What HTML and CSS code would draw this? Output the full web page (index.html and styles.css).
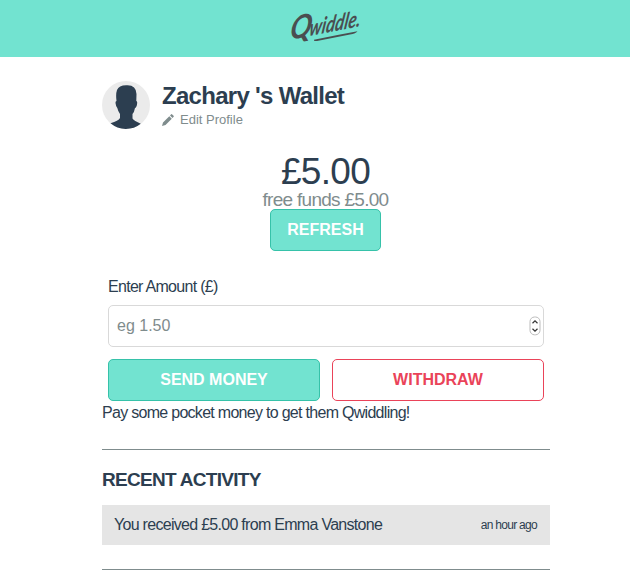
FILE: index.html
```html
<!DOCTYPE html>
<html lang="en">
<head>
<meta charset="utf-8">
<title>Qwiddle</title>
<link rel="stylesheet" href="styles.css">
</head>
<body>
<header class="topbar">
  <svg class="logo" width="90" height="57" viewBox="280 0 90 57" role="img" aria-label="Qwiddle">
    <g transform="translate(289 40) rotate(-11) skewX(-20)" class="wordmark">
      <text x="0" y="0" font-size="31" textLength="22" lengthAdjust="spacingAndGlyphs">Q</text>
      <text x="20" y="0" font-size="22" textLength="52" lengthAdjust="spacingAndGlyphs">widdle.</text>
    </g>
    <path d="M314 39.800Q337 35 357.500 31.300Q356 33.500 350 34.600L317 41Q313 41.500 314 39.800Z" fill="#4a4e50"/>
  </svg>
</header>
<main class="wallet">
  <section class="profile">
    <svg class="avatar" width="48" height="48" viewBox="0 0 48 48">
      <circle cx="24" cy="24" r="24" fill="#ebebeb"/>
      <path d="M15 9Q17 4 25 4.300Q34 4 34.500 13L34.300 20Q35.800 20 34.800 24.500Q34 27 33 27Q32.300 31 30.500 33V37.500Q32 40 38.800 42.700A24 24 0 0 1 8.500 42.300Q16.500 40 18 37V33Q16 30 15.300 27Q14 26 13.500 22Q13.400 20 14.500 20Q13.600 13 15 9Z" fill="#2c3e50"/>
    </svg>
    <div>
      <h1 class="title">Zachary 's Wallet</h1>
      <a class="edit">
        <svg width="12" height="12" viewBox="0 0 12 12" fill="#7f8c8d"><path d="M0 12L1 8.400L7.300 2.200L9.800 4.700L3.500 11Z M8 1.500L9.200 .3Q9.700 -.1 10.200 .4L11.600 1.800Q12.100 2.300 11.600 2.800L10.500 4Z"/></svg>
        <span>Edit Profile</span>
      </a>
    </div>
  </section>
  <section class="balance">
    <div class="amount">£5.00</div>
    <div class="free">free funds £5.00</div>
    <button class="btn primary refresh">REFRESH</button>
  </section>
  <section class="transfer">
    <label class="label">Enter Amount (£)</label>
    <div class="field">
      <span>eg 1.50</span>
      <svg width="12" height="20" viewBox="0 0 12 20" fill="none"><rect x="1" y="1" width="10" height="17.800" rx="4.500" fill="#fff" stroke="#bbb"/><path d="M3.500 7.200L6 4.800L8.500 7.200M3.500 12.800L6 15.200L8.500 12.800" stroke="#333" stroke-width="1.200"/></svg>
    </div>
    <div class="actions">
      <button class="btn primary">SEND MONEY</button>
      <button class="btn outline">WITHDRAW</button>
    </div>
  </section>
  <p class="hint">Pay some pocket money to get them Qwiddling!</p>
  <section class="activity">
    <h2 class="subtitle">RECENT ACTIVITY</h2>
    <div class="row"><span>You received £5.00 from Emma Vanstone</span><span class="time">an hour ago</span></div>
  </section>
</main>
</body>
</html>
```
FILE: styles.css
```css
* { box-sizing: border-box; }
body {
  margin: 0;
  background: #fff;
  color: #2c3e50;
  font: 16px/20px "Liberation Sans", Arial, sans-serif;
  letter-spacing: -0.71px;
}
.topbar {
  height: 57px;
  background: #72e3d0;
  display: flex;
  justify-content: center;
  padding-left: 20px;
}
.logo { overflow: visible; }
.wordmark {
  font-family: Lato, sans-serif;
  font-style: italic;
  font-weight: 700;
  letter-spacing: 0;
  fill: #4a4e50;
}
.wallet { width: 448px; margin: 0 0 0 102px; padding-top: 24px; }
.profile { display: flex; gap: 12px; height: 48px; }
.title { margin: 0; font-size: 24px; line-height: 28px; padding-top: 1px; }
.edit {
  display: flex;
  align-items: center;
  gap: 6px;
  height: 20px;
  font-size: 13px;
  letter-spacing: 0;
  color: #7f8c8d;
}
.balance {
  display: flex;
  flex-direction: column;
  align-items: center;
  padding: 25px 1px 0 0;
}
.amount { font-size: 37px; line-height: 36px; height: 35px; }
.free { font-size: 19px; line-height: 20px; color: #7f8c8d; padding-top: 1px; height: 20px; }
.btn {
  height: 42px;
  border: 1px solid;
  border-radius: 5px;
  font: bold 16px/20px "Liberation Sans", Arial, sans-serif;
  letter-spacing: 0;
  padding: 0;
}
.primary { background: #72e3d0; border-color: #36c2a9; color: #fff; }
.outline { background: #fff; border-color: #ea4359; color: #ea4359; }
.refresh { width: 111px; }
.transfer { padding: 26px 6px 0; }
.label { display: block; height: 28px; }
.field {
  display: flex;
  align-items: center;
  justify-content: space-between;
  height: 42px;
  padding: 0 2px 0 8px;
  border: 1px solid #d9d9d9;
  border-radius: 5px;
  color: #7f8c8d;
  letter-spacing: 0;
}
.actions { display: grid; grid-template-columns: 1fr 1fr; gap: 12px; margin-top: 12px; }
.hint { margin: 2px 0 26px; }
.activity {
  border: solid #7f8c8d;
  border-width: 1px 0;
  height: 121px;
  padding-top: 20px;
}
.subtitle { margin: 0 0 15px; font-size: 19px; line-height: 20px; }
.row {
  display: flex;
  align-items: center;
  justify-content: space-between;
  height: 40px;
  padding: 0 13px 0 12px;
  background: #e5e5e5;
}
.time { font-size: 12px; }
```
